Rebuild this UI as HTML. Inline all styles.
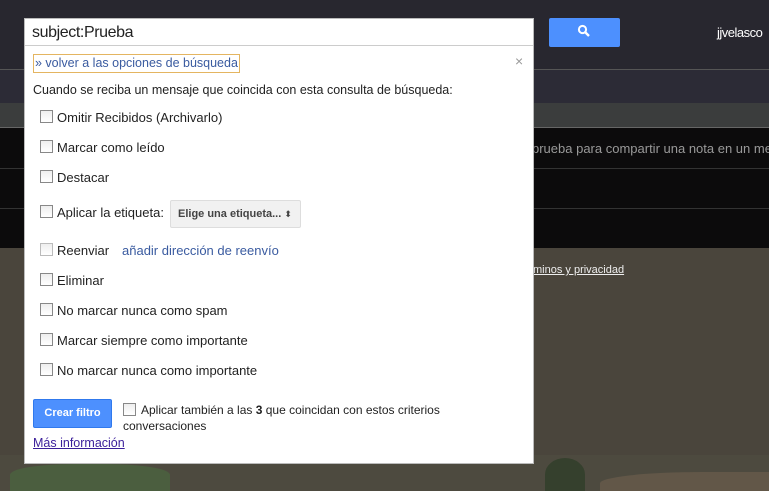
<!DOCTYPE html>
<html><head><meta charset="utf-8"><style>
*{margin:0;padding:0;box-sizing:border-box}
body{width:769px;height:491px;overflow:hidden;position:relative;font-family:"Liberation Sans",Arial,sans-serif;background:#4a453c}
.abs{position:absolute}
.cb{position:absolute;width:13px;height:13px;border:1px solid #888;background:linear-gradient(#eee,#fff);left:15px}
.row{position:absolute;left:0;font-size:13px;color:#222}
.row span{position:absolute;left:32px;white-space:nowrap}
</style></head><body>
<div class="abs" style="left:0;top:0;width:769px;height:69px;background:#28272f"></div>
<div class="abs" style="left:0;top:69px;width:769px;height:1px;background:#555"></div>
<div class="abs" style="left:0;top:70px;width:769px;height:33px;background:#2c2b36"></div>
<div class="abs" style="left:0;top:103px;width:769px;height:24px;background:#3b3d3d"></div>
<div class="abs" style="left:0;top:127px;width:769px;height:1px;background:#666"></div>
<div class="abs" style="left:0;top:128px;width:769px;height:120px;background:#0c0b0c"></div>
<div class="abs" style="left:0;top:168px;width:769px;height:1px;background:#333"></div>
<div class="abs" style="left:0;top:208px;width:769px;height:1px;background:#333"></div>
<div class="abs" style="left:532px;top:141px;font-size:13px;color:#999;white-space:nowrap">prueba para compartir una nota en un mensaje</div>
<div class="abs" style="left:533px;top:264px;font-size:11px;color:#eee;text-decoration:underline">minos y privacidad</div>
<div class="abs" style="left:549px;top:18px;width:71px;height:29px;background:#4d90fe;border-radius:2px"></div>
<svg class="abs" style="left:577px;top:24px" width="14" height="14" viewBox="0 0 14 14"><circle cx="5.5" cy="5.5" r="3.6" fill="none" stroke="#fff" stroke-width="2"/><line x1="8" y1="8" x2="12" y2="12" stroke="#fff" stroke-width="2.4"/></svg>
<div class="abs" style="left:717px;top:25px;font-size:13px;color:#fff;letter-spacing:-0.5px">jjvelasco</div>
<div class="abs" style="left:0;top:455px;width:769px;height:36px;background:#4d4a3f"></div>
<div class="abs" style="left:10px;top:464px;width:160px;height:27px;background:#4b5e3f;border-radius:40% 40% 0 0"></div>
<div class="abs" style="left:545px;top:458px;width:40px;height:33px;background:#35402d;border-radius:50% 50% 0 0"></div>
<div class="abs" style="left:600px;top:472px;width:169px;height:19px;background:#625748;border-radius:60% 0 0 0"></div>

<div class="abs" style="left:24px;top:18px;width:510px;height:446px;background:#fff;border:1px solid #bbb">
 <div class="abs" style="left:7px;top:5px;font-size:16px;letter-spacing:-0.4px;color:#222">subject:Prueba</div>
 <div class="abs" style="left:0;top:26px;width:508px;height:1px;background:#ccc"></div>
 <div class="abs" style="left:8px;top:35px;padding:1px 1px;border:1px solid #e4b561;font-size:12.5px;color:#3a5ba0;white-space:nowrap;line-height:15px">» volver a las opciones de búsqueda</div>
 <div class="abs" style="left:490px;top:34px;font-size:14px;color:#999">×</div>
 <div class="abs" style="left:8px;top:64px;font-size:12.5px;color:#222;white-space:nowrap">Cuando se reciba un mensaje que coincida con esta consulta de búsqueda:</div>
 <div class="row" style="top:91px"><div class="cb"></div><span>Omitir Recibidos (Archivarlo)</span></div>
 <div class="row" style="top:121px"><div class="cb"></div><span>Marcar como leído</span></div>
 <div class="row" style="top:151px"><div class="cb"></div><span>Destacar</span></div>
 <div class="row" style="top:186px"><div class="cb"></div><span>Aplicar la etiqueta:</span></div>
 <div class="abs" style="left:145px;top:181px;width:131px;height:28px;background:#f1f1f1;border:1px solid #ddd;border-radius:2px;font-size:11px;font-weight:bold;color:#444;padding:7px 0 0 7px;white-space:nowrap">Elige una etiqueta... <span style="font-size:9px;font-weight:normal">⬍</span></div>
 <div class="row" style="top:224px"><div class="cb" style="border-color:#bbb"></div><span>Reenviar</span><span style="left:97px;color:#3a5ba0">añadir dirección de reenvío</span></div>
 <div class="row" style="top:254px"><div class="cb"></div><span>Eliminar</span></div>
 <div class="row" style="top:284px"><div class="cb"></div><span>No marcar nunca como spam</span></div>
 <div class="row" style="top:314px"><div class="cb"></div><span>Marcar siempre como importante</span></div>
 <div class="row" style="top:344px"><div class="cb"></div><span>No marcar nunca como importante</span></div>
 <div class="abs" style="left:8px;top:380px;width:79px;height:29px;background:#4d90fe;border:1px solid #3079ed;border-radius:2px;color:#fff;font-size:11px;font-weight:bold;text-align:center;line-height:27px">Crear filtro</div>
 <div class="cb" style="left:98px;top:384px"></div>
 <div class="abs" style="left:116px;top:384px;font-size:12px;color:#222;white-space:nowrap">Aplicar también a las <b>3</b> que coincidan con estos criterios</div>
 <div class="abs" style="left:98px;top:400px;font-size:12px;color:#222">conversaciones</div>
 <div class="abs" style="left:8px;top:417px;font-size:12.5px;color:#3a1e9a;text-decoration:underline">Más información</div>
</div>
</body></html>
